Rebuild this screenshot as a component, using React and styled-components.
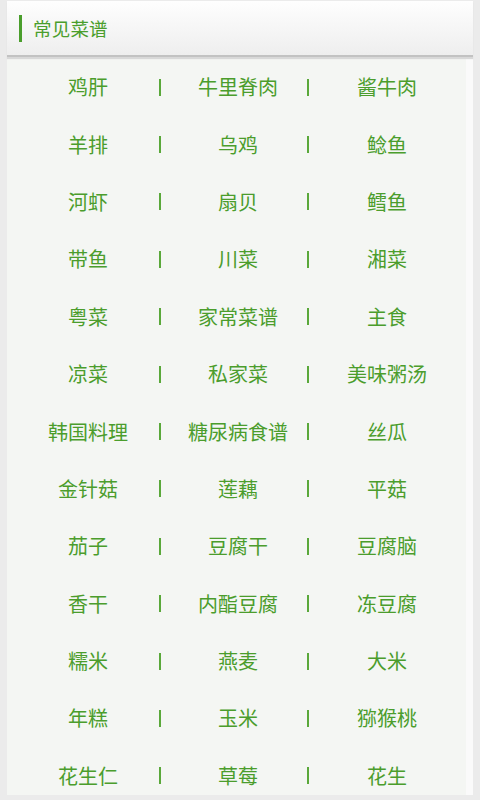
import React from "react";
import styled, { createGlobalStyle } from "styled-components";

const Global = createGlobalStyle`
  html, body { margin: 0; padding: 0; background: #ebebeb; }
  body { font-family: "Noto Sans CJK SC", "Noto Sans", sans-serif; }
  * { box-sizing: border-box; }
`;

const Page = styled.div`
  width: 480px;
  height: 800px;
  overflow: hidden;
  padding: 1px 7px 0 7px;
  background: #ebebeb;
`;

const Header = styled.div`
  height: 56px;
  display: flex;
  align-items: center;
  padding-left: 12px;
  background: linear-gradient(#fefefe, #eeeeee);
  border-bottom: 2px solid #c2c2c2;
  box-shadow: 0 2px 1px #d8d8d8;
  position: relative;
  z-index: 1;
`;

const Mark = styled.div`
  width: 3px;
  height: 27px;
  background: #4a9e2c;
  margin-right: 11px;
`;

const Title = styled.div`
  font-size: 18.5px;
  color: #4a9e2c;
  letter-spacing: 0.2px;
`;

const Panel = styled.div`
  width: 466px;
  background: #fafafa;
  padding-right: 7px;
  height: 738px;
`;

const Grid = styled.div`
  background: #f4f6f3;
  height: 100%;
  padding-top: 1px;
  padding-left: 11px;
  display: grid;
  grid-template-columns: 140px 4px 144px 4px 154px;
  grid-auto-rows: 57.4px;
  align-items: center;
`;

const Item = styled.div`
  text-align: center;
  font-size: 20px;
  color: #4b9d2c;
  white-space: nowrap;
  padding-left: ${(p) => p.$shift || 0}px;
`;

const Sep = styled.div`
  justify-self: center;
  width: 1.5px;
  height: 17px;
  background: #5aa83a;
  margin-top: 1px;
`;

const rows = [
  ["鸡肝", "牛里脊肉", "酱牛肉"],
  ["羊排", "乌鸡", "鲶鱼"],
  ["河虾", "扇贝", "鳕鱼"],
  ["带鱼", "川菜", "湘菜"],
  ["粤菜", "家常菜谱", "主食"],
  ["凉菜", "私家菜", "美味粥汤"],
  ["韩国料理", "糖尿病食谱", "丝瓜"],
  ["金针菇", "莲藕", "平菇"],
  ["茄子", "豆腐干", "豆腐脑"],
  ["香干", "内酯豆腐", "冻豆腐"],
  ["糯米", "燕麦", "大米"],
  ["年糕", "玉米", "猕猴桃"],
  ["花生仁", "草莓", "花生"],
];

export default function App() {
  return (
    <>
      <Global />
      <Page>
        <Header>
          <Mark />
          <Title>常见菜谱</Title>
        </Header>
        <Panel>
          <Grid>
            {rows.map((r, i) => (
              <React.Fragment key={i}>
                <Item>{r[0]}</Item>
                <Sep />
                <Item $shift={8}>{r[1]}</Item>
                <Sep />
                <Item>{r[2]}</Item>
              </React.Fragment>
            ))}
          </Grid>
        </Panel>
      </Page>
    </>
  );
}
